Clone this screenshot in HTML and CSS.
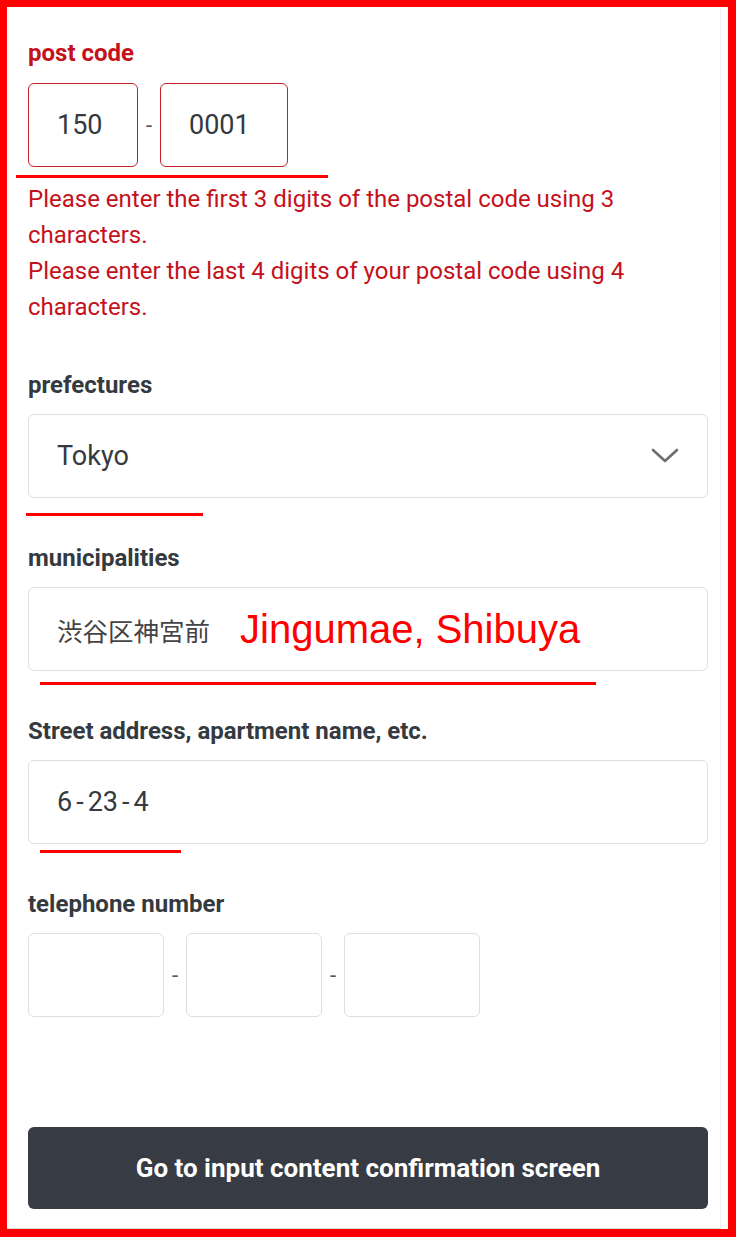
FILE: index.html
```html
<!DOCTYPE html>
<html lang="ja">

<head>
    <meta charset="UTF-8">
    <meta name="viewport" content="width=device-width, initial-scale=1.0">
    <title>Address</title>
    <link rel="stylesheet" href="styles.css">
</head>

<body>
    <div class="frame">
        <main class="page">
            <form class="address-form">
                <!-- post code -->
                <div class="field field-postal">
                    <div class="label label-error">post code</div>
                    <div class="split">
                        <div class="box box-error box-zip1">150</div>
                        <span class="dash">-</span>
                        <div class="box box-error box-zip2">0001</div>
                    </div>
                    <div class="error-msg">
                        <p>Please enter the first 3 digits of the postal code using 3 characters.</p>
                        <p>Please enter the last 4 digits of your postal code using 4 characters.</p>
                    </div>
                </div>

                <div class="field">
                    <div class="label">prefectures</div>
                    <div class="box box-select">
                        <span>Tokyo</span>
                        <svg class="chevron" width="28" height="16" viewBox="0 0 28 16">
                            <path d="M2 2 L14 13 L26 2" fill="none" stroke="#6b6e72" stroke-width="2.6" stroke-linecap="round" stroke-linejoin="round"/>
                        </svg>
                    </div>
                </div>

                <div class="field">
                    <div class="label">municipalities</div>
                    <div class="box">
                        <span class="jp">渋谷区神宮前</span>
                        <span class="note">Jingumae, Shibuya</span>
                    </div>
                </div>

                <div class="field">
                    <div class="label">Street address, apartment name, etc.</div>
                    <div class="box">6<span class="hy">-</span>23<span class="hy">-</span>4</div>
                </div>

                <div class="field field-last">
                    <div class="label">telephone number</div>
                    <div class="split">
                        <div class="box box-tel"></div>
                        <span class="dash">-</span>
                        <div class="box box-tel"></div>
                        <span class="dash">-</span>
                        <div class="box box-tel"></div>
                    </div>
                </div>
            </form>

            <div class="actions">
                <button type="button" class="btn">Go to input content confirmation screen</button>
            </div>
        </main>

        <!-- red marks drawn over the screenshot -->
        <span class="mark mark-postal"></span>
        <span class="mark mark-pref"></span>
        <span class="mark mark-city"></span>
        <span class="mark mark-street"></span>
    </div>
</body>

</html>
```

FILE: styles.css
```css
/* Reset dasar */
body {
    margin: 0;
    font-family: Roboto, "Noto Sans", Arial, sans-serif;
    background: white;
    color: #343a40;
}

.frame {
    position: relative;
    height: 1237px;
    box-sizing: border-box;
    border-style: solid;
    border-color: #ff0000;
    border-width: 7px 8px 8px 7px;
}

.page {
    width: 714px;
    height: 100%;
    box-sizing: border-box;
    padding: 32px 12px 0 21px;
    border-right: 1px solid #f1f1f1;
    border-bottom: 1px solid #dcdcdc;
}

.field {
    margin-bottom: 46px;
}

.field-last {
    margin-bottom: 0;
}

.label {
    font-size: 24px;
    font-weight: bold;
    line-height: 28px;
    color: #343a40;
    margin-bottom: 15px;
}

.label-error {
    color: #c4111b;
    margin-bottom: 16px;
}

.split {
    display: flex;
    align-items: center;
}

.dash {
    width: 22px;
    text-align: center;
    font-size: 22px;
    color: #555;
}

.box {
    display: flex;
    align-items: center;
    height: 84px;
    box-sizing: border-box;
    padding: 0 28px;
    border: 1.5px solid #dedede;
    border-radius: 6px;
    font-size: 27px;
    color: #343a40;
    background: white;
}

.box-error {
    border-color: #c4202a;
}

.box-zip1 {
    width: 110px;
}

.box-zip2 {
    width: 128px;
}

.box-tel {
    width: 136px;
}

.hy {
    margin: 0 4px;
}

.box-select {
    justify-content: space-between;
}

.jp {
    font-family: "Noto Sans CJK JP", sans-serif;
    font-size: 25.5px;
    color: #444;
}

.note {
    margin-left: 30px;
    font-family: "Liberation Sans", Arial, sans-serif;
    font-size: 40px;
    color: #ff0000;
}

.error-msg {
    margin-top: 14px;
    color: #c4111b;
    font-size: 24px;
    line-height: 36px;
}

.error-msg p {
    margin: 0;
    width: 640px;
}

.actions {
    margin-top: 110px;
}

.btn {
    display: block;
    width: 100%;
    height: 82px;
    border: none;
    border-radius: 6px;
    background: #373b43;
    color: white;
    font-family: Roboto, Arial, sans-serif;
    font-size: 26px;
    font-weight: bold;
}

.mark {
    position: absolute;
    height: 3px;
    background: #ff0000;
}

.mark-postal {
    left: 9px;
    top: 168px;
    width: 312px;
}

.mark-pref {
    left: 19px;
    top: 506px;
    width: 177px;
}

.mark-city {
    left: 33px;
    top: 675px;
    width: 556px;
}

.mark-street {
    left: 33px;
    top: 843px;
    width: 141px;
}
```
